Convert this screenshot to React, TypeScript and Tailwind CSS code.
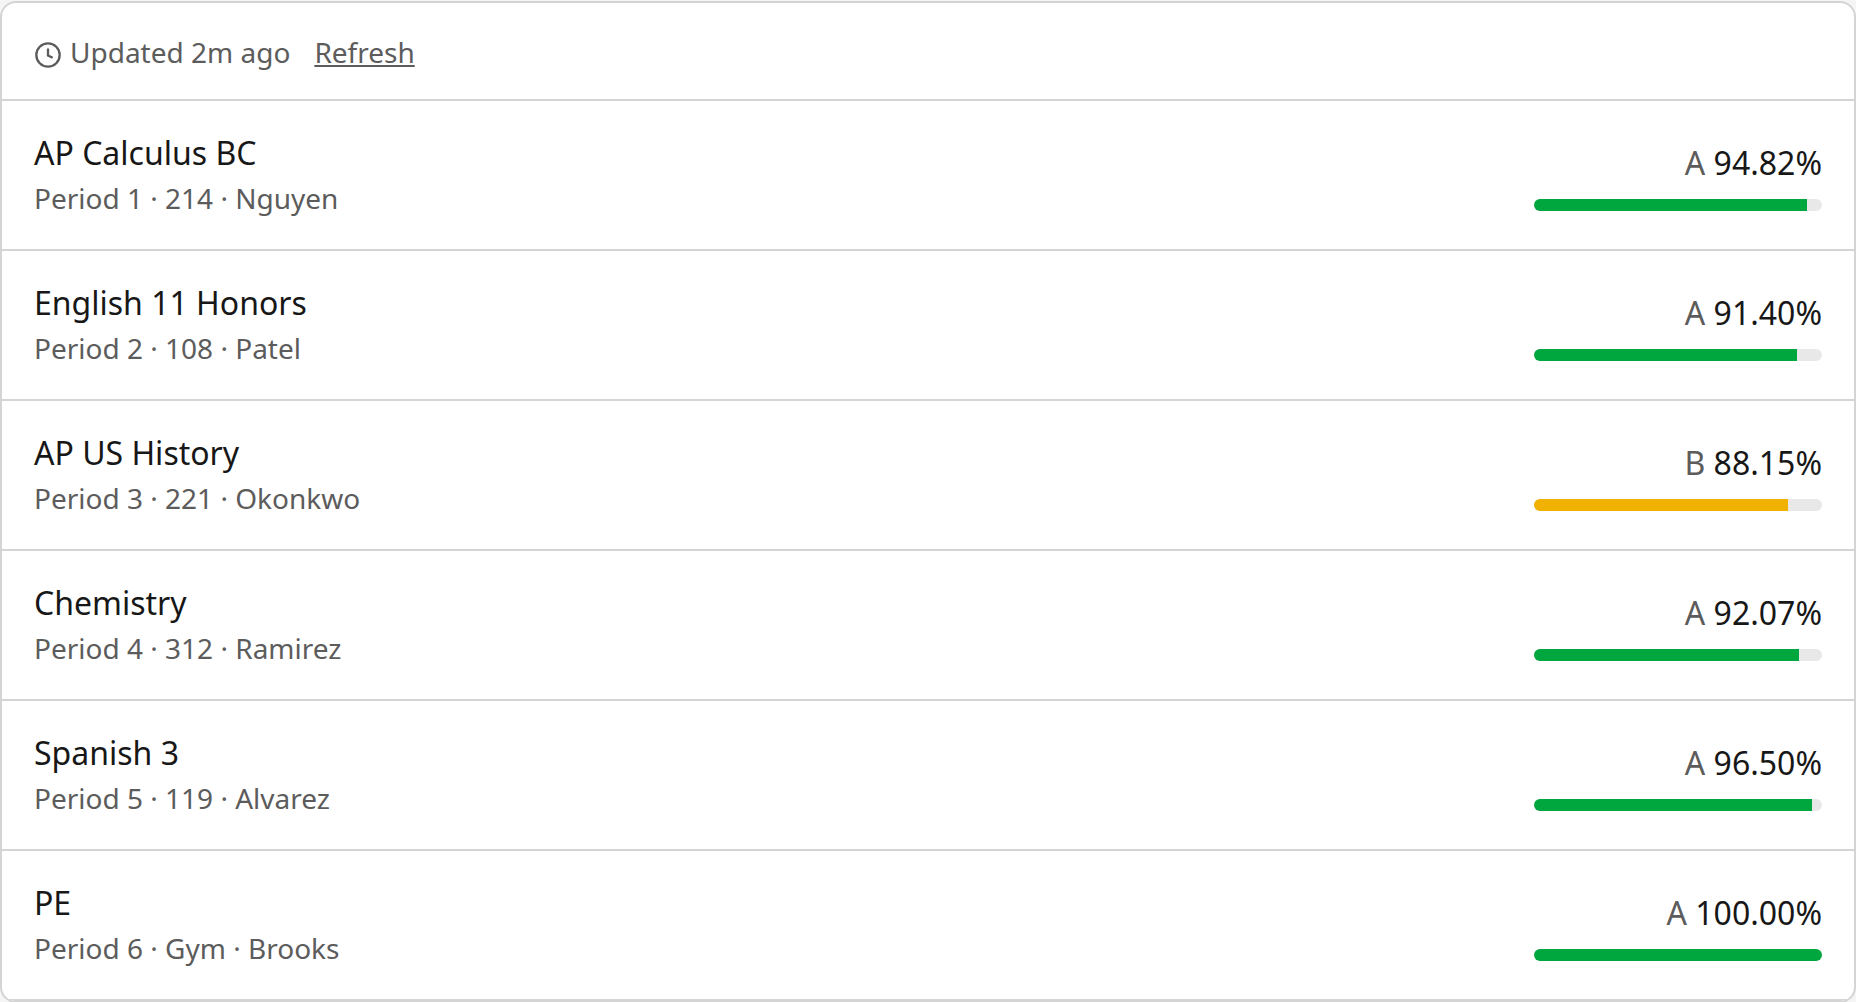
import React from "react";

type Course = {
  name: string;
  period: number;
  room: string;
  teacher: string;
  letter: string;
  percent: number;
};

const courses: Course[] = [
  { name: "AP Calculus BC", period: 1, room: "214", teacher: "Nguyen", letter: "A", percent: 94.82 },
  { name: "English 11 Honors", period: 2, room: "108", teacher: "Patel", letter: "A", percent: 91.4 },
  { name: "AP US History", period: 3, room: "221", teacher: "Okonkwo", letter: "B", percent: 88.15 },
  { name: "Chemistry", period: 4, room: "312", teacher: "Ramirez", letter: "A", percent: 92.07 },
  { name: "Spanish 3", period: 5, room: "119", teacher: "Alvarez", letter: "A", percent: 96.5 },
  { name: "PE", period: 6, room: "Gym", teacher: "Brooks", letter: "A", percent: 100 },
];

function ClockIcon() {
  return (
    <svg viewBox="0 0 24 24" className="mt-1.5 size-7" fill="none" stroke="currentColor" strokeWidth="2" aria-hidden="true">
      <circle cx="12" cy="12" r="10" />
      <path d="M12 6.4v6l4 2" />
    </svg>
  );
}

function CourseRow({ course }: { course: Course }) {
  const fill = course.letter === "A" ? "h-full bg-[#00a63e]" : "h-full bg-[#f0b100]";
  return (
    <li className="flex items-center justify-between gap-8 border-b-2 border-[#d4d4d4] px-8 py-7">
      <div className="min-w-0 pb-px">
        <h2 className="text-[32px] leading-[47px] text-[#171717]">{course.name}</h2>
        <p className="text-[28px] leading-[44px]">
          Period {course.period} · {course.room} · {course.teacher}
        </p>
      </div>
      <div className="flex w-72 shrink-0 flex-col gap-[13px]">
        <p className="text-right text-[32px] leading-[47px]">
          {course.letter} <span className="text-[#171717]">{course.percent.toFixed(2)}%</span>
        </p>
        <div
          className="h-3 overflow-hidden rounded-full bg-[#e8e8e8]"
          role="progressbar"
          aria-label={course.name}
          aria-valuenow={course.percent}
          aria-valuemin={0}
          aria-valuemax={100}
        >
          <div className={fill} style={{ width: `${course.percent}%` }} />
        </div>
      </div>
    </li>
  );
}

export default function App() {
  return (
    <main className="h-screen overflow-hidden bg-[#f5f5f5] pt-px font-['Noto_Sans',sans-serif] text-[#5c5c5c]">
      <section className="overflow-hidden rounded-2xl border-2 border-[#d4d4d4] bg-white">
        <header className="flex items-center gap-6 border-b-2 border-[#d4d4d4] px-8 pt-7 pb-[26px] text-[28px] leading-[42px]">
          <span className="flex items-center gap-2">
            <ClockIcon />
            Updated 2m ago
          </span>
          <button type="button" className="cursor-pointer underline">
            Refresh
          </button>
        </header>
        <ul>
          {courses.map((course) => (
            <CourseRow key={course.period} course={course} />
          ))}
        </ul>
      </section>
    </main>
  );
}
